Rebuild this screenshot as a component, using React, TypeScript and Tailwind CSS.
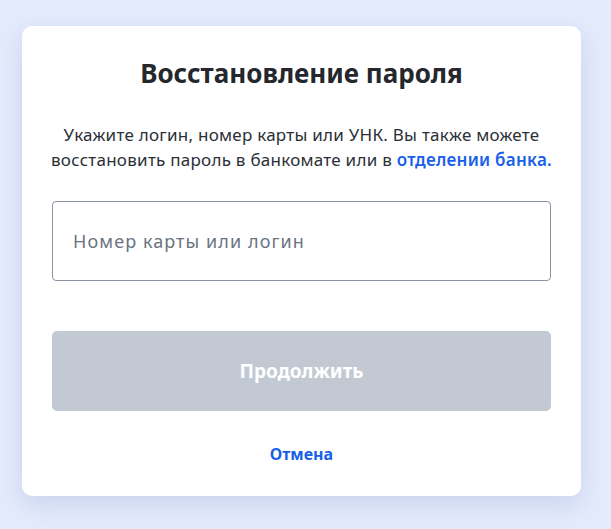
export default function App() {
  return (
    <div className="min-h-screen w-full bg-[#e4ebfc] pt-[26px] font-['Noto_Sans',sans-serif]">
      <div className="ml-[22px] w-[559px] rounded-[10px] bg-white px-[30px] pt-[30px] pb-[30px] shadow-[0_8px_24px_rgba(120,140,190,0.25)]">
        {/* Heading */}
        <h1 className="text-center text-[26px] font-bold leading-[34px] text-[#24272c]">
          Восстановление пароля
        </h1>

        {/* Intro */}
        <p className="-mx-[10px] mt-[32px] text-center text-[17px] leading-[25px] tracking-[0.015em] text-[#2b2f36]">
          Укажите логин, номер карты или УНК. Вы также можете восстановить пароль в банкомате или в{" "}
          <a href="#" className="font-semibold text-[#1a5fe8]">
            отделении банка.
          </a>
        </p>

        {/* Login field */}
        <div className="mt-[29px] flex h-[80px] items-center rounded-[4px] border border-[#8a94a6] px-[20px]">
          <span className="text-[18px] tracking-[0.06em] text-[#6b7380]">Номер карты или логин</span>
        </div>

        {/* Submit */}
        <button
          disabled
          className="mt-[50px] flex h-[80px] w-full items-center justify-center rounded-[5px] bg-[#c3c9d3] text-[19px] font-bold text-white"
        >
          Продолжить
        </button>

        <div className="mt-[31px] flex justify-center">
          <a href="#" className="text-[16px] font-bold leading-[24px] text-[#1a5fe8]">
            Отмена
          </a>
        </div>
      </div>
    </div>
  );
}
